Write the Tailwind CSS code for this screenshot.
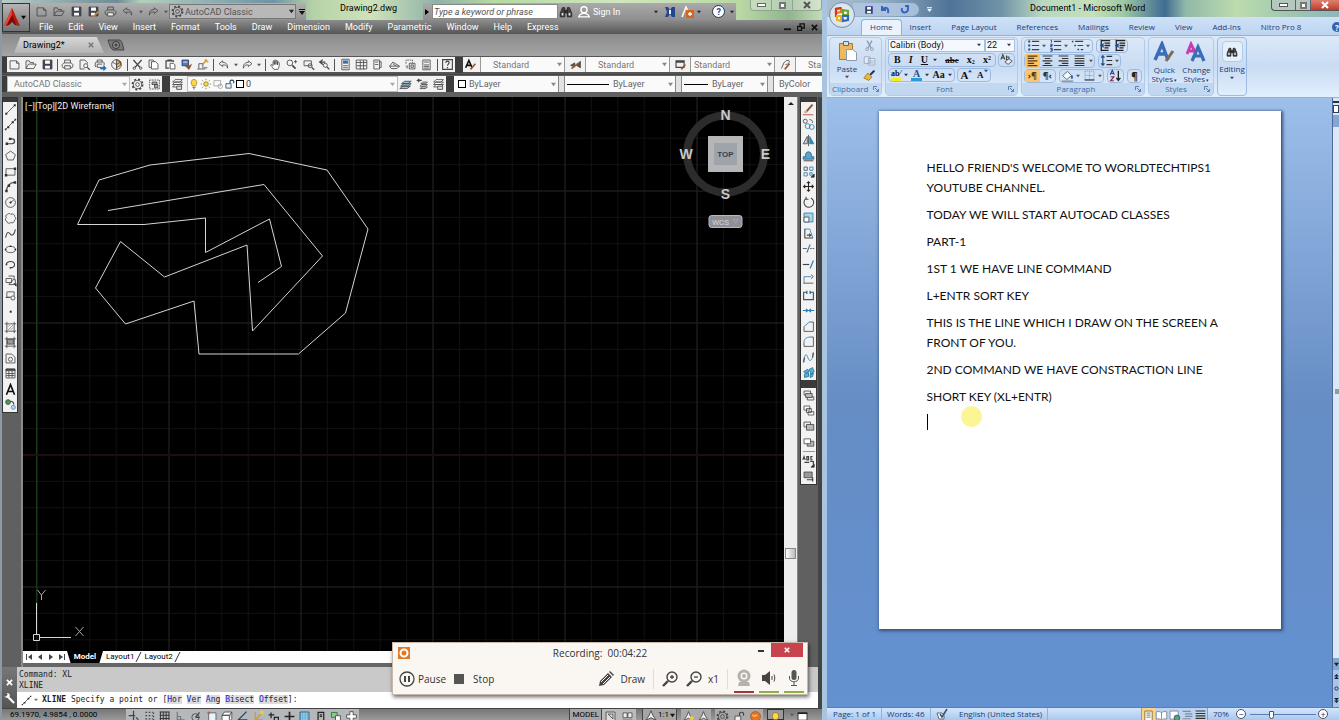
<!DOCTYPE html>
<html lang="en">
<head>
<meta charset="utf-8">
<title>Drawing2.dwg / Document1</title>
<script src="https://cdn.jsdelivr.net/npm/@tailwindcss/browser@4"></script>
</head>
<body class="h-screen overflow-hidden bg-[#b9cfe0] font-['Roboto','Open_Sans',sans-serif] text-[9px] leading-3 text-[#222]">

<svg class="hidden" aria-hidden="true">
  <!-- file and view tools -->
  <symbol id="new" viewBox="0 0 16 16"><path d="M2.5 3.5h8l3 3v7h-11zM10.500 3.500v3h3"/></symbol>
  <symbol id="open" viewBox="0 0 16 16"><path d="M2.500 13V3.500h4l1 2h4v2M2.500 13l3-5.500h9.500l-3 5.500z"/></symbol>
  <symbol id="save" viewBox="0 0 16 16"><path fill="#3c4652" d="M2.500 2.500h11v11h-11z"/><path fill="#fff" stroke="none" d="M5 3h6v4H5zM5 9.500h6v3.500H5z"/></symbol>
  <symbol id="saveas" viewBox="0 0 16 16"><path fill="#3c4652" d="M2.500 2.500h11v11h-11z"/><path fill="#fff" stroke="none" d="M5 3h6v4H5zM5 9.500h5v3.500H5z"/><path stroke="#d08a30" stroke-width="2" d="M8 14l6-6"/></symbol>
  <symbol id="plot" viewBox="0 0 16 16"><path d="M4.500 6V2.500h7V6M4 12H2.500l-1-1V8l2-2h9l2 2v3l-1 1H12"/><path fill="#eee" d="M4.500 9.500h7v4h-7z"/></symbol>
  <symbol id="preview" viewBox="0 0 16 16"><path d="M8 13.500H2.500v-11h6l3 3V7"/><circle cx="9.500" cy="9.500" r="2.500"/><path stroke-width="1.500" d="M11.500 11.500l3 3"/></symbol>
  <symbol id="publish" viewBox="0 0 16 16"><path d="M4 5V2.500h6V5M3 10.500H1.500V6l1-1h9l1 1v3M4 7.500h6M4 7.500v4h4"/><path fill="#2b6cb0" stroke="#2b6cb0" d="M8 11.500h4V9.500l3 3-3 3v-2H8z"/></symbol>
  <symbol id="globe" viewBox="0 0 16 16"><circle cx="8" cy="8" r="6"/><path fill="#e9b83a" d="M8 2l5 3v4L8 12z"/><path d="M3 5l5 3 5-3M8 8v6"/></symbol>
  <symbol id="cut" viewBox="0 0 16 16"><path stroke-width="1.600" d="M3 2.500l8 9M13 2.500l-8 9"/><circle cx="4" cy="12.500" r="1.500"/><circle cx="12" cy="12.500" r="1.500"/></symbol>
  <symbol id="copy" viewBox="0 0 16 16"><path d="M5 11.500H2.500v-9h5l2 2"/><path fill="#fff" d="M5.500 4.500h5l3 3v6h-8z"/></symbol>
  <symbol id="paste" viewBox="0 0 16 16"><path stroke-width="1.500" d="M6 12.500H2.500v-9h9V5M5 3.500v-1h4v1"/><path fill="#fff" d="M7.500 6.500h4l2 2v5h-6z"/></symbol>
  <symbol id="match" viewBox="0 0 16 16"><path fill="#4b7fc0" stroke="#335" d="M2.500 2.500h8v7h-8z"/><path stroke="#fff" d="M4 5h5"/><path fill="#8a5020" stroke="#8a5020" d="M7 10l4 4 3-6-3 2z"/></symbol>
  <symbol id="blockedit" viewBox="0 0 16 16"><path d="M1.500 13.500h10M3.500 13v-6h5v6"/><path stroke="#e0a020" stroke-width="2" d="M9 7l4-5M11 2l4 3"/><path d="M10 12h4"/></symbol>
  <symbol id="undo" viewBox="0 0 16 16"><path d="M7 3.500L2.500 7 7 10.500v-2c3 0 5 0 6 4 .500-5-2-7-6-7z"/></symbol>
  <symbol id="redo" viewBox="0 0 16 16"><path d="M9 3.500L13.500 7 9 10.500v-2c-3 0-5 0-6 4-.500-5 2-7 6-7z"/></symbol>
  <symbol id="hand" viewBox="0 0 16 16"><path fill="#fff" d="M6 14C4 11 3 10 2 8.500c1-1 2 0 3 1V4c1-1 1.500 0 1.500 1V8 3c1-1 2-.500 2 0v5-4.500c1-1 2-.500 2 .500v4.500V5c1-.500 2 0 2 1v4l-1.500 4z"/></symbol>
  <symbol id="zoomrt" viewBox="0 0 16 16"><circle cx="6" cy="6" r="3.500"/><path stroke-width="2" d="M9 9l4 4"/><path d="M11 4.500h4M13 2.500v4"/></symbol>
  <symbol id="zoomwin" viewBox="0 0 16 16"><path d="M2.500 3.500h9v6h-9z"/><circle cx="10" cy="9.500" r="2.500"/><path stroke-width="1.600" d="M12 11.500l3 3"/></symbol>
  <symbol id="zoomprev" viewBox="0 0 16 16"><path stroke-width="1.500" d="M6 2L2 5l4 3M2 5h7"/><circle cx="9" cy="9" r="2.500"/><path stroke-width="1.600" d="M11 11l3 3"/></symbol>
  <symbol id="props" viewBox="0 0 16 16"><path d="M3.500 1.500h9v13h-9z"/><path fill="#3a6ea8" stroke="none" d="M5 3h6v4H5z"/><path d="M5 9.500h6M5 12h6"/></symbol>
  <symbol id="dc" viewBox="0 0 16 16"><path d="M1.500 2.500h13v11h-13zM1.500 5.500h13M6.500 3v11M10.500 3v11M2 9.500h12"/></symbol>
  <symbol id="palette" viewBox="0 0 16 16"><path d="M3.500 2.500h7v11h-7zM10.500 4.500h2v7h-2M5 5h4M5 8h4"/></symbol>
  <symbol id="sheet" viewBox="0 0 16 16"><path d="M2 10l4-5 8 5-3 3H4zM2 10h12M6 7l4 3"/></symbol>
  <symbol id="markup" viewBox="0 0 16 16"><path stroke-dasharray="2 1" d="M2.500 7V2.500h8V6"/><path d="M6.500 6.500h7v7h-7zM2 10h3M3 12h2M8.500 8.500h3v3h-3z"/></symbol>
  <symbol id="calc" viewBox="0 0 16 16"><path d="M3.500 2.500h9v12h-9zM5 5h6M5 8.500h6M5 10.500h6M5 12.500h6"/></symbol>
  <symbol id="help" viewBox="0 0 16 16"><path stroke-width="1.400" d="M2 2h12v12H2zM6 6c0-3 4-2.500 4-.500S8 7.500 8 9.500M8 11v1.500"/></symbol>
  <symbol id="gear" viewBox="0 0 16 16"><circle cx="8" cy="8" r="2.300"/><circle cx="8" cy="8" r="5"/><circle cx="8" cy="8" r="6.300" stroke-width="2" stroke-dasharray="2.500 2.450"/></symbol>
  <symbol id="wsave" viewBox="0 0 16 16"><path stroke-dasharray="2 1" d="M2 2.500h12v11H2z"/><path fill="#aaa" d="M5 5h6v3H5zM8 8h4v4H8z"/></symbol>
  <symbol id="layers" viewBox="0 0 16 16"><path fill="#fff" d="M2 11l3-3h9l-3 3zM2 8l3-3h9l-3 3zM2 5l3-3h9l-3 3z"/><path d="M7 10h6v4H7z" fill="#ddd"/></symbol>
  <symbol id="layersb" viewBox="0 0 16 16"><path fill="#9cc4dc" d="M1 13l4-3h9l-4 3zM2 10l4-3h9l-4 3zM3 7l4-3h8l-4 3z"/></symbol>
  <symbol id="layerp" viewBox="0 0 16 16"><path d="M5 13l2-2h7l-2 2zM5 10l2-2h7l-2 2zM6 7l2-2h6l-2 2z"/><path stroke-width="1.500" d="M7 3H2l2-2M2 3l2 2"/></symbol>
  <!-- drawing tools -->
  <symbol id="line" viewBox="0 0 16 16"><path d="M3 13L13 3"/><path fill="#333" stroke="none" d="M1.500 12h2.500v2.500H1.500zM12 1.500h2.500V4H12z"/></symbol>
  <symbol id="xline" viewBox="0 0 16 16"><path d="M2 14L14 2"/><path fill="#333" stroke="none" d="M4 10h2.500v2.500H4zM9.500 4H12v2.500H9.500zM1 13h2v2H1zM13 1h2v2h-2z"/></symbol>
  <symbol id="pline" viewBox="0 0 16 16"><path stroke-width="1.500" d="M3 12h7c4 0 4-6 0-6H8"/><path fill="#333" stroke="none" d="M2 10.500h3v3H2zM6 4.500h3v3H6z"/></symbol>
  <symbol id="polygon" viewBox="0 0 16 16"><path d="M8 2.500l6 4.500-2.500 6.500h-7L2 7z"/></symbol>
  <symbol id="rect" viewBox="0 0 16 16"><path d="M2.500 4.500h11v8h-11z"/><path fill="#333" stroke="none" d="M1 11h3v3H1zM12 3h3v3h-3z"/></symbol>
  <symbol id="arc" viewBox="0 0 16 16"><path stroke-width="1.400" d="M3 14C3 8 7 3 13 3"/><path fill="#333" stroke="none" d="M1.500 12h3v3h-3zM4.500 5.500h3v3h-3zM12 1.500h3v3h-3z"/></symbol>
  <symbol id="circle" viewBox="0 0 16 16"><circle cx="8" cy="8" r="6"/><path d="M8 8l4-3"/><circle cx="8" cy="8" r="1" fill="#333"/></symbol>
  <symbol id="cloud" viewBox="0 0 16 16"><path d="M4 3c2-2 4-1 4.500 0 2-1.500 5 0 4.500 2.500 2 1 2 3.500 0 4.500 0 3-3 4-4.500 3-1.500 1.500-5 1-5-1.500-2-.500-2.500-3-.500-4.500C1.500 6 2 3.500 4 3z"/></symbol>
  <symbol id="spline" viewBox="0 0 16 16"><path stroke-width="1.300" d="M2 13c2-10 5-5 6-4s4 3 6-6"/></symbol>
  <symbol id="ellipse" viewBox="0 0 16 16"><ellipse cx="8" cy="8" rx="6" ry="3.800"/><path fill="#333" stroke="none" d="M1 7h2v2H1zM7 3h2v2H7zM13 7h2v2h-2z"/></symbol>
  <symbol id="earc" viewBox="0 0 16 16"><path stroke-width="1.300" d="M3 8c0-5 10-5 10 0 0 3-3 4-5 4"/><path fill="#333" stroke="none" d="M2 7h2v2H2zM7 11h2v2H7z"/></symbol>
  <symbol id="insert" viewBox="0 0 16 16"><path d="M5.500 2.500h7v4M2.500 5.500h7v5h-7zM6 13l5-6h3v6z"/><path fill="#333" d="M12 12h3v3z"/></symbol>
  <symbol id="block" viewBox="0 0 16 16"><path d="M3.500 3.500h9v5M3.500 4v6h5M2 10.500h5"/><circle cx="11" cy="11" r="2.500"/></symbol>
  <symbol id="point" viewBox="0 0 16 16"><path fill="#333" stroke="none" d="M7 7h2.500v2.500H7z"/></symbol>
  <symbol id="hatch" viewBox="0 0 16 16"><path d="M3.500 1v14M12.500 1v14M1 3.500h14M1 12.500h14"/><path stroke="#888" d="M5 7l2-2M5 11l6-6M8 11l3-3"/></symbol>
  <symbol id="gradient" viewBox="0 0 16 16"><path fill="#999" d="M4 4h8v6H4z"/><path d="M3.500 1v14M12.500 1v14M1 3.500h14M1 12.500h14"/></symbol>
  <symbol id="region" viewBox="0 0 16 16"><path d="M2.500 13.500v-11h7l4 4v7z"/><circle cx="8" cy="9" r="2.500"/></symbol>
  <symbol id="table" viewBox="0 0 16 16"><path d="M2.500 2.500h11v11h-11zM6 5v8M10 5v8M3 8h10M3 10.500h10"/><path fill="#444" d="M2.500 2.500h11v2h-11z"/></symbol>
  <symbol id="mtext" viewBox="0 0 16 16"><path stroke="#111" stroke-width="2" d="M3 14.500L8 2l5 12.500M5 10.500h6"/></symbol>
  <symbol id="addsel" viewBox="0 0 16 16"><circle cx="5" cy="5" r="3" fill="#4c9a4c"/><circle cx="11.500" cy="11.500" r="2.500" fill="#bcd9f0" stroke="#4a86b8"/><path stroke-width="1.500" d="M8 4c3 0 4 1 4 4"/></symbol>
  <!-- modify tools -->
  <symbol id="erase" viewBox="0 0 16 16"><path stroke="#8a5a3a" stroke-width="2.500" d="M5 11l8-9"/><path stroke="#d8b08a" stroke-width="3" d="M3 12l3-2"/><path stroke="#b33" d="M1 14.500h13"/></symbol>
  <symbol id="copyobj" viewBox="0 0 16 16"><circle cx="4" cy="4" r="2.500"/><circle cx="7" cy="10" r="3" stroke="#2a7ab0"/><circle cx="12" cy="11" r="3" stroke="#2a7ab0"/><path d="M9 2c3 0 4 1 4 4"/></symbol>
  <symbol id="mirror" viewBox="0 0 16 16"><path fill="#c8dce8" d="M6.500 3v9H1.500z"/><path fill="#3a8ab8" stroke="#2a7ab0" d="M9.500 3v9h5z"/><path d="M8 1v14"/></symbol>
  <symbol id="offset" viewBox="0 0 16 16"><path fill="#5aa6cf" stroke="#235e86" d="M1.500 12.500h13v-3h-3c2-8-9-8-7 0h-3z"/><path stroke="#222" d="M2 14.500h12"/></symbol>
  <symbol id="array" viewBox="0 0 16 16"><path d="M2.500 2.500h4v4h-4z"/><path stroke="#2a7ab0" d="M9.500 2.500h4v4h-4zM2.500 9.500h4v4h-4zM9.500 9.500h3v3h-3z"/><path fill="#222" d="M15 11v4h-4z"/></symbol>
  <symbol id="move" viewBox="0 0 16 16"><path stroke="#222" stroke-width="1.300" d="M8 2v12M2 8h12M6 4l2-2 2 2M6 12l2 2 2-2M4 6L2 8l2 2M12 6l2 2-2 2"/></symbol>
  <symbol id="rotate" viewBox="0 0 16 16"><path stroke-width="1.300" d="M5 3a6 6 0 1 0 6-.500M5 1v3h3"/></symbol>
  <symbol id="scale" viewBox="0 0 16 16"><path fill="#a9d3e8" stroke="#2a7ab0" d="M2.500 2.500h11v11h-11z"/><path fill="#fff" d="M2.500 7.500h6v6h-6z"/></symbol>
  <symbol id="stretch" viewBox="0 0 16 16"><path stroke="#2a7ab0" d="M3.500 2.500h6l4 11"/><path stroke-width="1.300" d="M3.500 2v11.500h10M6 10h5M9 8l2 2-2 2"/></symbol>
  <symbol id="trim" viewBox="0 0 16 16"><path d="M1 8h5"/><path stroke-dasharray="2 1" d="M10 8h5"/><path stroke="#2a7ab0" stroke-width="1.400" d="M6 13l4-10"/></symbol>
  <symbol id="extend" viewBox="0 0 16 16"><path stroke-width="1.400" d="M1 8h8"/><path stroke="#2a7ab0" stroke-width="1.400" d="M10 13l4-10"/></symbol>
  <symbol id="breakpt" viewBox="0 0 16 16"><path stroke="#2a7ab0" d="M2.500 13V4.500H11"/><path d="M11 2l3 2.500L11 7M2 12.500h12"/></symbol>
  <symbol id="break" viewBox="0 0 16 16"><path stroke="#2a5a80" stroke-width="1.400" d="M6 4H2v9h12V4h-4M6 2v4M10 2v4"/></symbol>
  <symbol id="join" viewBox="0 0 16 16"><path stroke="#2a7ab0" stroke-width="1.500" d="M1 8h14M5 6l2 2-2 2M11 6L9 8l2 2"/></symbol>
  <symbol id="chamfer" viewBox="0 0 16 16"><path d="M2.500 14V8M9 2.500h5v11.500H2.500"/><path stroke="#2a7ab0" d="M2.500 8L9 2.500"/></symbol>
  <symbol id="fillet" viewBox="0 0 16 16"><path d="M2.500 14V9M10 2.500h4v11.500H2.500"/><path stroke="#2a7ab0" d="M2.500 9c0-4 3-6.500 7.500-6.500"/></symbol>
  <symbol id="blend" viewBox="0 0 16 16"><path stroke-width="1.600" d="M2 14l1-6M14 2l-1 6"/><path stroke="#2a7ab0" d="M3 8c2-8 4 0 5 2s3 3 5-2"/></symbol>
  <symbol id="explode" viewBox="0 0 16 16"><path fill="#5fb0d4" stroke="#1f6f9a" d="M2 7l5-3 2 2-4 3zM9 4l4-2 2 5-4 3zM3 10l5-2v5l-5 1zM10 10l4-1-1 4-3 1z"/></symbol>
  <symbol id="front" viewBox="0 0 16 16"><path d="M2.500 2.500h8v5h-8zM6.500 9.500h8v4h-8z"/><path fill="#b8b8b8" d="M4.500 5.500h8v5h-8z"/></symbol>
  <symbol id="back" viewBox="0 0 16 16"><path fill="#fff" d="M5.500 5.500h6v5h-6zM2.500 2.500h7v5h-7zM7.500 9.500h7v4h-7z"/></symbol>
  <symbol id="above" viewBox="0 0 16 16"><path d="M2.500 2.500h8v6h-8z"/><path fill="#b8b8b8" d="M5.500 5.500h9v7h-9z"/></symbol>
  <symbol id="under" viewBox="0 0 16 16"><path fill="#b8b8b8" d="M6.500 6.500h8v6h-8z"/><path fill="#fff" d="M2.500 3.500h8v6h-8z"/></symbol>
  <symbol id="abcfront" viewBox="0 0 16 16"><path stroke-width="1.500" d="M1 6l1.500-4L4 6M6 2v4h2V2zM13 2h-2v4h2M3 9h6M10 8h4v4"/><path fill="#222" d="M15 11v4h-4z"/></symbol>
  <symbol id="hatchback" viewBox="0 0 16 16"><path fill="#999" d="M2.500 2.500h10v7h-10z"/><path stroke-width="1.500" d="M6 12h8M13 9v5"/></symbol>
  <!-- annotation styles -->
  <symbol id="tstyle" viewBox="0 0 16 16"><path stroke="#111" stroke-width="2" d="M2 12L6 3l4 9M4 9h4"/><path stroke="#9a5a30" stroke-width="2" d="M8 14l6-7"/></symbol>
  <symbol id="dstyle" viewBox="0 0 16 16"><path fill="#555" d="M2 9l5-3v5zM14 4v8L9 9z"/><path stroke="#9a5a30" stroke-width="2" d="M3 13l9-7"/></symbol>
  <symbol id="tabstyle" viewBox="0 0 16 16"><path stroke-width="1.400" d="M2.500 3.500h10v8h-10zM2.500 5h10"/><path stroke="#9a5a30" stroke-width="2" d="M9 14l5-6"/></symbol>
  <symbol id="mlstyle" viewBox="0 0 16 16"><path d="M3 13l3-7 3-3h3c2 3-1 5-4 5"/><path stroke="#9a5a30" stroke-width="2" d="M7 14l6-7"/></symbol>
  <!-- status bar toggles -->
  <symbol id="s-infer" viewBox="0 0 16 16"><path stroke-width="1.500" d="M8 1v12M2 7h8M11 9l3 3"/></symbol>
  <symbol id="s-snap" viewBox="0 0 16 16"><path stroke-width="1.500" stroke-dasharray="2 2" d="M3 3h9M3 7h9M3 11h9M13 3v10H3"/></symbol>
  <symbol id="s-grid" viewBox="0 0 16 16"><path stroke="#333" stroke-width="1.200" d="M2 2.500h12M2 6.500h12M2 10.500h12M2 14h12M3 2v12M6.500 2v12M10 2v12M13.500 2v12"/></symbol>
  <symbol id="s-ortho" viewBox="0 0 16 16"><path stroke="#777" stroke-width="1.500" d="M4 2v10h9M4 8h4v4"/></symbol>
  <symbol id="s-polar" viewBox="0 0 16 16"><circle cx="8" cy="9" r="4.500"/><path stroke-width="1.500" d="M8 9l5-6M8 9h5"/></symbol>
  <symbol id="s-osnap" viewBox="0 0 16 16"><path fill="#e8f4fa" stroke="#555" d="M4.500 3.500h9v11h-9z"/><path fill="#c55" stroke="none" d="M3 2h3v3H3z"/></symbol>
  <symbol id="s-3d" viewBox="0 0 16 16"><path fill="#fff" d="M2.500 6.500h9v8h-9zM2.500 6.500l3-4h9l-3 4zM14.500 2.500v8l-3 4"/></symbol>
  <symbol id="s-otrack" viewBox="0 0 16 16"><path stroke="#246" stroke-width="1.500" d="M13 2L3 12h11"/></symbol>
  <symbol id="s-ducs" viewBox="0 0 16 16"><path stroke="#c93" stroke-width="1.500" d="M4 2v10h9M4 12l8-8"/><path fill="#ec4" stroke="none" d="M10 1h4v4h-4z"/></symbol>
  <symbol id="s-dyn" viewBox="0 0 16 16"><path stroke="#222" stroke-width="1.500" d="M5 3v7M2 6h7M9 9h5v4H9z"/></symbol>
  <symbol id="s-lwt" viewBox="0 0 16 16"><path stroke="#222" stroke-width="2" d="M8 2v11M2 8h12"/></symbol>
  <symbol id="s-tpy" viewBox="0 0 16 16"><path fill="#8fd0ee" stroke="#246" d="M2.500 2.500h11v12h-11z"/><path stroke="#3a8ab8" stroke-dasharray="1 1" d="M3 5h10M3 7h10M3 9h10M3 11h10"/></symbol>
  <symbol id="s-qp" viewBox="0 0 16 16"><path stroke="#222" stroke-width="1.500" d="M5 3h7v10H5zM7 6h3M7 8h3"/></symbol>
  <symbol id="s-sc" viewBox="0 0 16 16"><path fill="#8c8" stroke="#363" d="M3 3h7v6H3z"/><path d="M8 7h6v6H8z" fill="#fff"/></symbol>
  <symbol id="s-am" viewBox="0 0 16 16"><path fill="#fff" d="M6 2h4v4h4v4h-4v4H6v-4H2V6h4z"/></symbol>
  <symbol id="s-model" viewBox="0 0 16 16"><path fill="#ddd" d="M2.500 2.500h11v11h-11z"/><path d="M5 5h6v6M5 5l6 6"/></symbol>
  <symbol id="s-layout" viewBox="0 0 16 16"><path fill="#eee" d="M2.500 3.500h5v6h-5zM8.500 3.500h5v6h-5zM2 12.500h12"/></symbol>
  <symbol id="s-ann" viewBox="0 0 16 16"><path fill="#eee" d="M8 2l2 5 4 6-6-3-6 3 4-6z"/></symbol>
  <symbol id="s-annb" viewBox="0 0 16 16"><path fill="#eee" d="M8 2l2 5 4 6-6-3-6 3 4-6z"/><circle cx="12" cy="10" r="2.500" fill="#ec4" stroke="none"/></symbol>
  <symbol id="lock" viewBox="0 0 16 16"><path fill="#eee" d="M2.500 7.500h7v6h-7z"/><path stroke-width="1.500" d="M8 7V5c0-3 5-3 5 0v2"/></symbol>
  <symbol id="s-orange" viewBox="0 0 16 16"><circle cx="8" cy="8" r="6" fill="#e87722" stroke="#a85010"/><path stroke="#fff" d="M4 6c2 2 4 2 6 0"/></symbol>
  <symbol id="bulb" viewBox="0 0 16 16"><path fill="#ffd84a" stroke="#a07a20" d="M6 10.500C3 7 4 2 8 2s5 5 2 8.500z"/><path d="M6 12.500h4M7 14.500h2"/></symbol>
  <symbol id="s-clean" viewBox="0 0 16 16"><path fill="#fff" stroke="#222" d="M2.500 3.500h11v9h-11z"/><path stroke="#222" stroke-width="2" d="M2 4h12"/></symbol>
  <symbol id="sun" viewBox="0 0 16 16"><circle cx="8" cy="8" r="3" fill="#ffd84a" stroke="#8a7020"/><path stroke="#8a7020" d="M8 1v2M8 13v2M1 8h2M13 8h2M3 3l1.500 1.500M11.500 11.500L13 13M13 3l-1.500 1.500M4.500 11.500L3 13"/></symbol>
  <symbol id="vpfreeze" viewBox="0 0 16 16"><path stroke="#999" d="M2.500 3.500h9v7h-9z"/><circle cx="11" cy="11" r="3" stroke="#999"/></symbol>
  <!-- title bar helpers -->
  <symbol id="binoc" viewBox="0 0 16 16"><path fill="#444" stroke="#222" d="M1.500 9.500L4 3h2.500v10.500h-5zM14.500 9.500L12 3H9.500v10.500h5zM6.500 6h3v3h-3z"/><path fill="#dde" stroke="none" d="M3 9h2v3H3zM11 9h2v3h-2z"/></symbol>
  <symbol id="user" viewBox="0 0 16 16"><circle cx="8" cy="5.500" r="3.500" stroke="#fff" stroke-width="1.500"/><path stroke="#fff" stroke-width="1.500" d="M2 13.500c1-3 3-4 6-4s5 1 6 4z"/></symbol>
  <!-- word processor tools -->
  <symbol id="w-cut" viewBox="0 0 16 16"><path stroke="#8b97ab" stroke-width="1.500" d="M5 2l5 9M11 2l-5 9"/><circle cx="5" cy="12.500" r="1.800" stroke="#8b97ab"/><circle cx="11" cy="12.500" r="1.800" stroke="#8b97ab"/></symbol>
  <symbol id="w-copy" viewBox="0 0 16 16"><path fill="#e6edf6" stroke="#94a3ba" d="M1.500 3.500h7v8h-7zM6.500 5.500h8v8h-8zM8 8.500h5M8 11h5"/></symbol>
  <symbol id="w-brush" viewBox="0 0 16 16"><path stroke="#234" stroke-width="2.500" d="M9 7l5-5"/><path fill="#e8b93c" stroke="#9a7020" d="M6 5l5 5-4 4-6-3z"/></symbol>
  <symbol id="w-clear" viewBox="0 0 16 16"><path stroke-width="1.300" d="M1 8l2.500-6L6 8M2 6h3M8 3v5h3V5H8"/><path fill="#e8eef8" d="M6 11l5-4 4 3-5 4z"/></symbol>
  <symbol id="w-bullets" viewBox="0 0 16 16"><path stroke="#26477c" stroke-width="2.400" d="M1.500 3H4M1.500 8H4M1.500 13H4"/><path stroke="#444" stroke-width="1.500" d="M6 3h9M6 8h9M6 13h9"/></symbol>
  <symbol id="w-numbers" viewBox="0 0 16 16"><path stroke="#26477c" stroke-width="1.200" d="M2 1.500h1v3M1.500 6.500H4v1.500H2v1.500h2M1.500 11.500H4v3.500H1.500M2 13h2"/><path stroke="#444" stroke-width="1.500" d="M6 3h9M6 8h9M6 13h9"/></symbol>
  <symbol id="w-multi" viewBox="0 0 16 16"><path stroke="#26477c" stroke-width="1.800" d="M1 3h2M4 8h2M8 13h2"/><path stroke="#444" stroke-width="1.500" d="M5 3h10M8 8h7M12 13h3"/></symbol>
  <symbol id="w-indent" viewBox="0 0 16 16"><path stroke="#222" stroke-width="1.600" d="M4 2h11M8 5h7M8 8h7M8 11h5M4 14h9M4 1v14"/><path fill="#24508c" stroke="none" d="M7 5v6L2 8z"/></symbol>
  <symbol id="w-left" viewBox="0 0 16 16"><path stroke="#5a3a10" stroke-width="1.600" d="M2 2.500h12M2 5.500h8M2 8.500h12M2 11.500h8M2 14.200h12"/></symbol>
  <symbol id="w-center" viewBox="0 0 16 16"><path stroke="#333" stroke-width="1.400" d="M2 2.500h12M4.500 5.500h7M2 8.500h12M4.500 11.500h7M2 14.200h12"/></symbol>
  <symbol id="w-right" viewBox="0 0 16 16"><path stroke="#333" stroke-width="1.400" d="M2 2.500h12M6 5.500h8M2 8.500h12M6 11.500h8M2 14.200h12"/></symbol>
  <symbol id="w-just" viewBox="0 0 16 16"><path stroke="#333" stroke-width="1.400" d="M2 2.500h12M2 5.500h12M2 8.500h12M2 11.500h12M2 14.200h12"/></symbol>
  <symbol id="w-spacing" viewBox="0 0 16 16"><path stroke="#24508c" stroke-width="1.500" d="M3.500 2v12M1.500 4.500l2-2.500 2 2.500M1.500 11.500l2 2.500 2-2.500"/><path stroke="#333" stroke-width="1.500" d="M8 3h7M8 8h7M8 13h7"/></symbol>
  <symbol id="w-shade" viewBox="0 0 16 16"><path fill="#f4f8ff" stroke="#456" d="M2 8l6-5 5 5-6 5z"/><path stroke="#24508c" stroke-width="2" d="M13.500 8v4"/><path stroke="#999" stroke-width="2" d="M1 15h14"/></symbol>
  <symbol id="w-border" viewBox="0 0 16 16"><path stroke="#7f93b3" stroke-dasharray="1.500 1" d="M2.500 2.500h11v11M2.500 2.500v11M8 3v10M3 8h10"/><path stroke="#333" stroke-width="1.500" d="M2 13.500h12"/></symbol>
  <symbol id="w-sort" viewBox="0 0 16 16"><path stroke="#24508c" stroke-width="1.400" d="M1.500 7L4 1.500 6.500 7M2.500 5.500h3"/><path stroke="#8a2a50" stroke-width="1.400" d="M2 9.500h4l-4 5h4"/><path stroke="#222" stroke-width="1.600" d="M11.500 2v12M9 11l2.500 3 2.500-3"/></symbol>
  <symbol id="w-read" viewBox="0 0 16 16"><path fill="#fff" stroke="#6d7d98" d="M1.500 3.500c3-1 5 0 6.500 1 1.500-1 3.500-2 6.500-1v9c-3-1-5 0-6.500 1-1.500-1-3.500-2-6.500-1zM8 4v9"/></symbol>
  <symbol id="w-print" viewBox="0 0 16 16"><path fill="#fff" stroke="#6d5a30" d="M3.500 2.500h9v12h-9zM5.500 5h5M5.500 7.500h5M5.500 10h5"/></symbol>
  <symbol id="w-web" viewBox="0 0 16 16"><path fill="#fff" stroke="#6d7d98" d="M2.500 2.500h10v10h-10z"/><circle cx="11" cy="11" r="3.500" fill="#5aa07a" stroke="#357"/></symbol>
  <symbol id="w-outline" viewBox="0 0 16 16"><path stroke="#7d8ba5" stroke-width="1.500" d="M2 3h10M5 6h9M5 9h9M2 12h10"/></symbol>
</svg>

<div class="relative grid h-full grid-cols-[822fr_517fr]">

<!-- ============ CAD window ============ -->
<section class="flex min-w-0 flex-col overflow-hidden border-l-2 border-[#8c9aa5] bg-[#606060]">

  <header class="relative h-[34px] shrink-0 bg-[#aebfba]">
    <div class="flex h-5 items-start bg-[linear-gradient(90deg,#b7cbc6_0%,#6f8d96_14%,#b4cfbb_17%,#6f93a8_33%,#b5d3a6_38%,#cfe3ba_45%,#8fb2a8_53%,#b7d9a2_60%,#d0e6c0_75%,#b9d8a4_90%,#8fb58f_96%,#c5dcb8_100%)]">
      <div class="mt-[3px] flex h-[17px] w-[304px] shrink-0 items-center bg-linear-to-b from-[#b0b0b0] to-[#929292] pl-8">
        <div class="flex w-[135px] items-center justify-between" data-tools="new open save saveas plot undo v redo v"></div>
        <label class="flex h-[15px] w-[127px] items-center border border-[#777] bg-[#b8b8b8] text-[#555]">
          <svg class="ml-px size-[13px] fill-none stroke-[#444]"><use href="#gear"/></svg>
          <select aria-label="Workspace" class="min-w-0 flex-1 appearance-none bg-transparent pl-px"><option>AutoCAD Classic</option></select>
          <svg class="mr-px size-[5px] fill-[#222]" viewBox="0 0 6 4"><path d="M0 0h6L3 4z"/></svg>
        </label>
        <button aria-label="Customize" class="ml-[3px]"><svg class="size-[6px] fill-[#111]" viewBox="0 0 6 6"><path d="M0 0h6v1H0zM0 2h6L3 6z"/></svg></button>
      </div>
      <h1 class="min-w-0 flex-1 pt-[2px] pl-[34px] whitespace-nowrap text-black">Drawing2.dwg</h1>
      <div class="mt-[3px] flex h-[17px] w-[313px] shrink-0 items-center bg-linear-to-b from-[#aaa] to-[#8e8e8e]">
        <svg class="ml-px size-[6px] fill-black" viewBox="0 0 6 6"><path d="M1 0l4 3-4 3z"/></svg>
        <input aria-label="Search help" placeholder="Type a keyword or phrase" class="ml-[2px] h-[15px] w-[126px] border border-[#888] bg-white px-px text-[9px] italic placeholder:text-[#555]">
        <button aria-label="Search" class="ml-px"><svg class="size-[14px]"><use href="#binoc"/></svg></button>
        <button class="ml-1 flex items-center gap-[2px] whitespace-nowrap text-white"><svg class="size-[14px] fill-none"><use href="#user"/></svg>Sign In</button>
        <svg class="ml-[34px] size-1 fill-[#222]" viewBox="0 0 6 4"><path d="M0 0h6L3 4z"/></svg>
        <svg class="ml-[6px] size-3" viewBox="0 0 12 12"><path fill="#25458f" d="M1 1h3l2 3 2-3h3v10H8L6 8l-2 3H1l2-5z"/><path fill="#e8eefa" d="M5 4h2v4H5z"/></svg>
        <svg class="ml-[5px] size-[13px]" viewBox="0 0 13 13"><path fill="none" stroke="#fff" stroke-width="1.500" d="M1 12l4-10 3 6"/><path fill="#d9641c" d="M5 5h8v8H5z"/><path stroke="#fff" stroke-width="1.300" d="M9 7v4M7 9h4"/></svg>
        <svg class="ml-[3px] size-1 fill-[#222]" viewBox="0 0 6 4"><path d="M0 0h6L3 4z"/></svg>
        <button aria-label="Help" class="ml-[11px] grid size-[13px] place-items-center rounded-full border border-[#235] bg-white text-[9px] font-bold text-[#25458f]">?</button>
        <svg class="ml-[5px] size-1 fill-[#222]" viewBox="0 0 6 4"><path d="M0 0h6L3 4z"/></svg>
      </div>
      <div class="ml-[14px] flex h-[11px] w-[72px] shrink-0 overflow-hidden rounded-b border border-t-0 border-[#8fa58c] bg-white/30 text-[#666]">
        <button aria-label="Minimize" class="grid flex-1 place-items-center border-r border-[#8fa58c]"><span class="h-[4px] w-[9px] border border-[#666] bg-white"></span></button>
        <button aria-label="Restore" class="grid flex-1 place-items-center border-r border-[#8fa58c]"><span class="size-[7px] border-2 border-[#777] bg-white"></span></button>
        <button aria-label="Close" class="grid w-7 place-items-center"><svg class="size-2 stroke-[#555]" viewBox="0 0 8 8"><path stroke-width="2" d="M1 1l6 6M7 1L1 7"/></svg></button>
      </div>
    </div>
    <nav class="flex h-[14px] items-center gap-[15px] bg-linear-to-b from-[#8c8c8c] to-[#565656] pl-[37px] text-white">
      <a href="#">File</a><a href="#">Edit</a><a href="#">View</a><a href="#">Insert</a><a href="#">Format</a><a href="#">Tools</a><a href="#">Draw</a><a href="#">Dimension</a><a href="#">Modify</a><a href="#">Parametric</a><a href="#">Window</a><a href="#">Help</a><a href="#">Express</a>
      <span class="ml-auto flex items-center gap-[6px] pr-1">
        <button aria-label="Minimize drawing"><svg class="size-[7px]" viewBox="0 0 8 8"><path stroke="#111" stroke-width="2" d="M0 6h8"/></svg></button>
        <button aria-label="Restore drawing"><svg class="size-2" viewBox="0 0 8 8"><path fill="none" stroke="#111" stroke-width="1.300" d="M.5 3.500h4v4h-4zM3 3V.8h4.300V5H5"/></svg></button>
        <button aria-label="Close drawing"><svg class="size-[7px]" viewBox="0 0 8 8"><path stroke="#111" stroke-width="2" d="M1 1l6 6M7 1L1 7"/></svg></button>
      </span>
    </nav>
    <button aria-label="Application menu" class="absolute top-[3px] left-0 flex h-[29px] w-7 items-center border border-[#333] bg-linear-to-b from-[#b5b5b5] to-[#757575]">
      <svg class="h-[22px] w-[18px]" viewBox="0 0 18 22"><path fill="#b8160c" d="M9 1l8 18-5-3-3-7-3 7-5 3z"/><path fill="#e8452c" d="M9 1L1 19l4-2 4-9z"/><path fill="#7d0a06" d="M9 8l4 9 4 2-5-1-3-3-3 3-3 1z"/></svg>
      <svg class="size-[5px] fill-black" viewBox="0 0 6 4"><path d="M0 0h6L3 4z"/></svg>
    </button>
  </header>

  <div class="flex h-[22px] shrink-0 items-end bg-linear-to-b from-[#8b8b8b] to-[#a5a5a5] pb-[3px] pl-3">
    <div class="flex h-4 w-[90px] items-center justify-between bg-linear-to-b from-[#d6d6d6] to-[#b4b4b4] pr-[10px] pl-[9px] text-black [clip-path:polygon(7%_0,92%_0,100%_100%,0_100%)]">Drawing2*<button aria-label="Close tab"><svg class="size-[6px]" viewBox="0 0 8 8"><path stroke="#777" stroke-width="2" d="M1 1l6 6M7 1L1 7"/></svg></button></div>
    <button aria-label="New drawing tab" class="mb-[2px] ml-[3px]"><svg class="h-3 w-[18px]" viewBox="0 0 18 12"><path fill="#777" stroke="#444" d="M1 1h12c2 1 3 6 4 10H6C3 9 2 4 1 1z"/><circle cx="9" cy="6" r="3.500" fill="#999" stroke="#333"/><path stroke="#333" d="M7 6h4M9 4v4"/></svg></button>
  </div>

  <div class="flex h-[18px] shrink-0 items-center bg-[#555] pb-px">
    <span class="h-4 w-[5px] shrink-0 bg-[#3d3d3d]"></span>
    <div class="flex h-[15px] w-[448px] shrink-0 items-center justify-between bg-[#f2f2f2]" data-tools="new open save | plot preview publish globe | cut copy paste match blockedit | undo v redo v | hand zoomrt zoomwin zoomprev | props dc palette sheet markup calc | help"></div>
    <span class="h-4 w-[8px] shrink-0 bg-[#3d3d3d]"></span>
    <div class="flex h-[15px] min-w-0 flex-1 items-center bg-[#f2f2f2] text-[#777]">
      <div class="flex w-[17px] shrink-0" data-tools="tstyle"></div>
      <label class="flex h-full w-[85px] shrink-0 items-center border-x border-[#999] bg-[#fafafa] pr-[2px] pl-3"><select aria-label="Text style" class="min-w-0 flex-1 appearance-none bg-transparent"><option>Standard</option></select><svg class="size-[5px] fill-[#888]" viewBox="0 0 6 4"><path d="M0 0h6L3 4z"/></svg></label>
      <div class="ml-[3px] flex w-[17px] shrink-0" data-tools="dstyle"></div>
      <label class="flex h-full w-[85px] shrink-0 items-center border-x border-[#999] bg-[#fafafa] pr-[2px] pl-3"><select aria-label="Dimension style" class="min-w-0 flex-1 appearance-none bg-transparent"><option>Standard</option></select><svg class="size-[5px] fill-[#888]" viewBox="0 0 6 4"><path d="M0 0h6L3 4z"/></svg></label>
      <div class="ml-[3px] flex w-[17px] shrink-0" data-tools="tabstyle"></div>
      <label class="flex h-full w-[85px] shrink-0 items-center border-x border-[#999] bg-[#fafafa] pr-[2px] pl-[3px]"><select aria-label="Table style" class="min-w-0 flex-1 appearance-none bg-transparent"><option>Standard</option></select><svg class="size-[5px] fill-[#888]" viewBox="0 0 6 4"><path d="M0 0h6L3 4z"/></svg></label>
      <div class="ml-[3px] flex w-[17px] shrink-0" data-tools="mlstyle"></div>
      <label class="flex h-full min-w-0 flex-1 items-center overflow-hidden border-l border-[#999] bg-[#fafafa] pl-3"><select aria-label="Multileader style" class="w-12 shrink-0 appearance-none bg-transparent"><option>Standard</option></select></label>
    </div>
  </div>

  <div class="flex h-[23px] shrink-0 items-start border-t border-[#444] bg-[#606060] pt-px">
    <span class="h-4 w-[5px] shrink-0 bg-[#3d3d3d]"></span>
    <div class="flex h-4 w-[155px] shrink-0 items-center bg-[#f2f2f2] text-[#777]">
      <label class="flex h-full flex-1 items-center border border-[#bbb] bg-[#fafafa] pr-[2px] pl-[6px]"><select aria-label="Workspace" class="min-w-0 flex-1 appearance-none bg-transparent"><option>AutoCAD Classic</option></select><svg class="size-[5px] fill-[#aaa]" viewBox="0 0 6 4"><path d="M0 0h6L3 4z"/></svg></label>
      <div class="flex w-8 shrink-0 justify-between" data-tools="gear wsave"></div>
    </div>
    <span class="h-4 w-[8px] shrink-0 bg-[#3d3d3d]"></span>
    <div class="flex h-4 w-[276px] shrink-0 items-center bg-[#f2f2f2] text-[#444]">
      <div class="flex w-[17px]" data-tools="layers"></div>
      <label class="flex h-full min-w-0 flex-1 items-center border border-[#bbb] bg-[#fafafa] pr-[2px]">
        <svg class="size-3 fill-none stroke-[#444]"><use href="#bulb"/></svg><svg class="size-3 fill-none"><use href="#sun"/></svg><svg class="size-3 fill-none"><use href="#vpfreeze"/></svg><svg class="size-3 fill-none stroke-[#246]"><use href="#lock"/></svg>
        <span class="mr-[2px] size-2 border border-black bg-white"></span>
        <select aria-label="Layer" class="min-w-0 flex-1 appearance-none bg-transparent"><option>0</option></select><svg class="size-[5px] fill-[#aaa]" viewBox="0 0 6 4"><path d="M0 0h6L3 4z"/></svg>
      </label>
      <div class="flex w-12 justify-between" data-tools="layersb layerp layers"></div>
    </div>
    <span class="h-4 w-[8px] shrink-0 bg-[#3d3d3d]"></span>
    <div class="flex h-4 min-w-0 flex-1 items-center gap-[5px] bg-[#e2e2e2] text-[#666]">
      <label class="flex h-full w-[105px] shrink-0 items-center gap-[3px] border-r border-[#888] bg-[#fafafa] pr-[2px] pl-1"><span class="size-2 border border-black bg-white"></span><select aria-label="Colour" class="min-w-0 flex-1 appearance-none bg-transparent"><option>ByLayer</option></select><svg class="size-[5px] fill-[#888]" viewBox="0 0 6 4"><path d="M0 0h6L3 4z"/></svg></label>
      <label class="flex h-full w-[112px] shrink-0 items-center gap-1 border-x border-[#888] bg-[#fafafa] pr-[2px] pl-[2px]"><span class="h-px w-[42px] bg-black"></span><select aria-label="Linetype" class="min-w-0 flex-1 appearance-none bg-transparent"><option>ByLayer</option></select><svg class="size-[5px] fill-[#888]" viewBox="0 0 6 4"><path d="M0 0h6L3 4z"/></svg></label>
      <label class="flex h-full w-[87px] shrink-0 items-center gap-1 border-x border-[#888] bg-[#fafafa] pr-[2px] pl-[2px]"><span class="h-px w-[24px] bg-black"></span><select aria-label="Lineweight" class="min-w-0 flex-1 appearance-none bg-transparent"><option>ByLayer</option></select><svg class="size-[5px] fill-[#888]" viewBox="0 0 6 4"><path d="M0 0h6L3 4z"/></svg></label>
      <label class="flex h-full min-w-0 flex-1 items-center overflow-hidden border-l border-[#888] bg-[#fafafa] pl-[5px]"><select aria-label="Plot style" class="w-12 shrink-0 appearance-none bg-transparent"><option>ByColor</option></select></label>
    </div>
  </div>

  <div class="flex min-h-0 flex-1">
    <aside class="w-[21px] shrink-0 border-r-2 border-[#8a8a8a] bg-[#606060]">
      <div class="w-4 border border-[#333] bg-[#3a3a3a] pt-1"><div class="flex h-[310px] flex-col items-center justify-between bg-[#f2f2f2]" data-tools="line xline pline polygon rect arc circle cloud spline ellipse earc insert block point hatch gradient region table mtext addsel"></div></div>
    </aside>

    <div class="flex min-w-0 flex-1 flex-col">
      <div class="flex min-h-0 flex-1">
        <div class="min-w-0 flex-1 bg-black">
          <svg class="block size-full" role="img" aria-label="Drawing area">
            <defs>
              <pattern id="minor" width="26.400" height="26.400" patternUnits="userSpaceOnUse" patternTransform="translate(36.500 454.500)"><path d="M.5 0v26.400M0 .5h26.400" stroke="#111" fill="none"/></pattern>
              <pattern id="major" width="132" height="132" patternUnits="userSpaceOnUse" patternTransform="translate(36.500 454.500)"><path d="M.5 0v132M0 .5h132" stroke="#1f2022" fill="none"/></pattern>
            </defs>
            <g transform="translate(-23 -97)">
              <rect x="23" y="97" width="2000" height="2000" fill="url(#minor)"/>
              <rect x="23" y="97" width="2000" height="2000" fill="url(#major)"/>
              <path d="M36.500 97V603" stroke="#1d3a1d"/>
              <path d="M23 455H2000" stroke="#240c0c" stroke-width="2"/>
              <polyline fill="none" stroke="#d4d4d4" points="108,210.500 264,184.500 322.500,256 252.500,331 247,245 164.500,277 120.500,241.500 95.500,288 125.500,324 194,301 199,354 298.500,354 345.500,313 368,229 327,170 249,153.500 150,165 99,180 77.500,224.500 144,224.500 205.500,218 205.500,252.500 269.500,219 281.500,266.500 258,282.500"/>
              <path fill="none" stroke="#d8d8d8" d="M36.500 603V634M39 637.500H71M33.500 634.500h6v6h-6z"/>
              <path fill="none" stroke="#aaa" d="M37.500 590l4 5 4-5M41.500 595v5M75.500 627l8 9M83.500 627l-8 9"/>
              <text x="25" y="109" fill="#eee" font-size="9">[−][Top][2D Wireframe]</text>
              <circle cx="725.500" cy="154" r="38.500" fill="none" stroke="#2c2c2c" stroke-width="8"/>
              <path fill="#b4b6b8" d="M708 136h35v36h-35z"/><path fill="#9fa4ab" d="M714 143h23v22h-23z"/>
              <g text-anchor="middle" font-weight="bold" font-family="Liberation Sans, sans-serif">
                <text x="725.500" y="157" fill="#3c4048" font-size="8">TOP</text>
                <g fill="#c9c9c9" font-size="14"><text x="725.500" y="120">N</text><text x="686" y="159">W</text><text x="765.500" y="159">E</text><text x="725.500" y="199">S</text></g>
              </g>
              <rect x="709" y="215.500" width="33" height="12" rx="2.500" fill="#8f9097" stroke="#b8b8be"/>
              <text x="712" y="224.500" fill="#d4d4d8" font-size="8">WCS</text><path fill="none" stroke="#a4a4aa" d="M733 219.500h5l-2.500 4z"/>
            </g>
          </svg>
        </div>
        <div class="flex w-[14px] shrink-0 flex-col items-center border-r border-[#888] bg-[#eee]">
          <svg class="mt-1 size-[6px] fill-[#222]" viewBox="0 0 6 6"><path d="M0 4h6L3 1z"/></svg>
          <span class="mt-auto mb-[92px] h-[11px] w-[11px] border border-[#888] bg-linear-to-r from-white to-[#bbb]"></span>
        </div>
      </div>
      <div class="flex h-3 shrink-0 items-center bg-white text-[8px] text-black">
        <span class="flex w-11 items-center justify-around text-[#333]">
          <button aria-label="First layout"><svg class="size-2" viewBox="0 0 8 8"><path fill="#444" d="M1 1h1v6H1zM7 1v6L3 4z"/></svg></button>
          <button aria-label="Previous layout"><svg class="size-2" viewBox="0 0 8 8"><path fill="#444" d="M6 1v6L2 4z"/></svg></button>
          <button aria-label="Next layout"><svg class="size-2" viewBox="0 0 8 8"><path fill="#444" d="M2 1v6l4-3z"/></svg></button>
          <button aria-label="Last layout"><svg class="size-2" viewBox="0 0 8 8"><path fill="#444" d="M6 1h1v6H6zM1 1v6l4-3z"/></svg></button>
        </span>
        <button class="h-full w-[36px] bg-black font-bold text-white [clip-path:polygon(0_0,100%_0,90%_100%,10%_100%)]">Model</button>
        <button class="pl-[3px]">Layout1</button>
        <svg class="mr-[2px] ml-px h-3 w-[7px]" viewBox="0 0 7 12"><path stroke="#333" d="M1 11L6 1"/></svg>
        <button>Layout2</button>
        <svg class="ml-px h-3 w-[7px]" viewBox="0 0 7 12"><path stroke="#333" d="M1 11L6 1"/></svg>
      </div>
      <div class="h-1 shrink-0 bg-[#666]"></div>
    </div>

    <aside class="w-6 shrink-0 border-r-4 border-[#444] bg-[#606060] pl-[2px]">
      <div class="w-[17px] border border-[#333] bg-[#3a3a3a] pt-1">
        <div class="flex h-[278px] flex-col items-center justify-between bg-[#f2f2f2]" data-tools="erase copyobj mirror offset array move rotate scale stretch trim extend breakpt break join chamfer fillet blend explode"></div>
        <div class="mt-2 flex h-[96px] flex-col items-center justify-between bg-[#f2f2f2]" data-tools="front back above under - abcfront hatchback"></div>
      </div>
    </aside>
  </div>

  <div class="flex h-[41px] shrink-0 font-['DejaVu_Sans_Mono',monospace] text-[8px] text-[#222]">
    <div class="flex w-[15px] shrink-0 flex-col items-center justify-around bg-linear-to-b from-[#777] to-[#555]">
      <svg class="mt-2 size-[7px]" viewBox="0 0 8 8"><path stroke="#fff" stroke-width="2" d="M1 1l6 6M7 1L1 7"/></svg>
      <svg class="size-[11px]" viewBox="0 0 12 12"><path fill="none" stroke="#fff" stroke-width="2.400" d="M5 5l6 6"/><path fill="#fff" d="M0 3l2 1 2-2-1-2c3 0 4 2 3 4S2 6 0 3z"/></svg>
    </div>
    <div class="min-w-0 flex-1">
      <div class="h-[25px] bg-[#c9c9c9] pt-[2px] pl-[2px] leading-[11px]"><p>Command: XL</p><p>XLINE</p></div>
      <div class="flex h-4 items-center gap-[2px] bg-white pl-1 whitespace-pre"><svg class="size-[11px] fill-none stroke-[#333]"><use href="#xline"/></svg><svg class="mr-[2px] size-1 fill-[#777]" viewBox="0 0 6 4"><path d="M0 0h6L3 4z"/></svg><p><b>XLINE</b> Specify a point or [<a href="#" class="bg-[#ddd] text-[#223]"><span class="text-[#22c]">H</span>or</a> <a href="#" class="bg-[#ddd] text-[#223]"><span class="text-[#22c]">V</span>er</a> <a href="#" class="bg-[#ddd] text-[#223]"><span class="text-[#22c]">A</span>ng</a> <a href="#" class="bg-[#ddd] text-[#223]"><span class="text-[#22c]">B</span>isect</a> <a href="#" class="bg-[#ddd] text-[#223]"><span class="text-[#22c]">O</span>ffset</a>]:</p></div>
    </div>
    <span class="w-1 bg-[#444]"></span>
  </div>

  <footer class="flex h-3 shrink-0 items-start overflow-hidden border-t border-[#444] bg-linear-to-b from-[#777] to-[#999]">
    <output class="w-[124px] shrink-0 pt-px pl-2 text-[8px] leading-[10px] text-black">69.1970, 4.9854 , 0.0000</output>
    <div class="flex w-[233px] shrink-0 justify-between bg-[#b5b8ba]" data-tools="s-infer s-snap s-grid s-ortho s-polar s-osnap s-3d s-otrack s-ducs s-dyn s-lwt s-tpy s-qp s-sc s-am"></div>
    <button class="ml-auto h-full border-x border-[#444] bg-[#a5a5a5] px-[2px] text-[8px] text-black">MODEL</button>
    <div class="flex w-[34px] justify-around bg-[#bbb]" data-tools="s-model s-layout"></div>
    <button class="ml-[6px] flex h-full items-start border-x border-[#444] bg-[#a5a5a5] px-px text-[8px] text-black"><svg class="size-[14px] fill-none stroke-[#444]"><use href="#s-ann"/></svg><span>1:1</span><svg class="mt-[4px] ml-px size-[5px] fill-[#111]" viewBox="0 0 6 4"><path d="M0 0h6L3 4z"/></svg></button>
    <div class="ml-1 flex bg-[#aaa]" data-tools="s-annb s-ann"></div>
    <div class="ml-1 flex w-12 justify-between bg-[#aaa]" data-tools="gear lock s-orange"></div>
    <div class="ml-1 flex h-full border border-[#333] bg-[#999]" data-tools="bulb"></div>
    <div class="ml-[5px] flex" data-tools="v s-clean"></div>
    <span class="w-[12px]"></span>
  </footer>
</section>

<!-- ============ Word processor window ============ -->
<section class="flex min-w-0 flex-col overflow-hidden border-l-[5px] border-[#a9c4de] bg-[#bfd6f1] font-['Open_Sans','Noto_Sans',sans-serif] text-[8px] text-[#1d3c73]">
  <header class="relative flex h-[17px] shrink-0 items-start bg-[linear-gradient(90deg,#a8bfd0_0%,#8ea9c0_12%,#4f7396_24%,#6f93a6_34%,#b9d8c0_42%,#c3e0b8_52%,#9cc8a4_58%,#3f6c92_66%,#90b8a8_70%,#bcdcae_80%,#a0c8b0_90%,#8fb4bc_100%)]">
    <div class="mt-[3px] ml-[26px] flex h-[13px] w-[66px] items-center gap-[6px] rounded-r-full bg-[#b4c9e4]/80 pl-[11px]">
      <button aria-label="Save"><svg class="size-[10px] fill-none stroke-[#33b]"><use href="#save"/></svg></button>
      <button aria-label="Undo"><svg class="size-[10px]" viewBox="0 0 10 10"><path fill="none" stroke="#3a62c0" stroke-width="2" d="M2 1v4h4M2 5c4-4 7-2 6 3"/></svg></button>
      <button aria-label="Repeat" class="ml-1"><svg class="size-[10px]" viewBox="0 0 10 10"><path fill="none" stroke="#3a62c0" stroke-width="2" d="M2 3c-2 6 7 6 6 0M5 1h3v3"/></svg></button>
    </div>
    <svg class="mt-[7px] ml-2 size-[5px] fill-white" viewBox="0 0 6 6"><path d="M0 0h6v1H0zM0 2h6L3 6z"/></svg>
    <h1 class="min-w-0 flex-1 pt-[2px] pl-[98px] font-['Roboto',sans-serif] text-[9px] whitespace-nowrap text-black">Document1 - Microsoft Word</h1>
    <div class="flex h-[11px] w-[68px] shrink-0 overflow-hidden rounded-bl border border-t-0 border-r-0 border-[#555] bg-[#b4c8bd]">
      <button aria-label="Minimize" class="grid w-6 place-items-center border-r border-[#567]"><span class="h-[4px] w-[9px] border border-[#555] bg-white"></span></button>
      <button aria-label="Restore" class="grid w-[15px] place-items-center border-r border-[#567]"><span class="size-[7px] border-2 border-[#777] bg-white"></span></button>
      <button aria-label="Close" class="grid flex-1 place-items-center bg-linear-to-b from-[#e08070] to-[#c0392b]"><svg class="size-2" viewBox="0 0 8 8"><path stroke="#fff" stroke-width="2" d="M1 1l6 6M7 1L1 7"/></svg></button>
    </div>
    <button aria-label="Office button" class="absolute top-[2px] left-[2px] grid size-[26px] place-items-center rounded-full border border-[#7b8ea8] bg-radial from-white to-[#c4d2e2]">
      <svg class="size-4" viewBox="0 0 16 16" fill="none" stroke-width="2.200"><path stroke="#e07a1a" d="M2 6V2l5-1v4z"/><path stroke="#d03a1a" d="M7 1l-5 1v8"/><path stroke="#6aa52a" d="M9 3l5 1v4H9z"/><path stroke="#2a6ac0" d="M8 9h6v4l-5 1z"/><path stroke="#eab020" d="M3 9h4v5l-4-1z"/></svg>
    </button>
  </header>

  <nav class="flex h-[18px] shrink-0 items-end bg-linear-to-b from-[#cfe1f7] to-[#bdd4f0] pl-[34px] whitespace-nowrap">
    <a href="#" class="mr-[-2px] h-4 rounded-t border border-b-0 border-[#8db2e3] bg-[#eaf2fc] px-2 pt-px">Home</a>
    <a href="#" class="h-4 px-[10px] pt-[2px]">Insert</a><a href="#" class="h-4 px-[10px] pt-[2px]">Page Layout</a><a href="#" class="h-4 px-[10px] pt-[2px]">References</a><a href="#" class="h-4 px-[10px] pt-[2px]">Mailings</a><a href="#" class="h-4 px-[10px] pt-[2px]">Review</a><a href="#" class="h-4 px-[10px] pt-[2px]">View</a><a href="#" class="h-4 px-[10px] pt-[2px]">Add-Ins</a><a href="#" class="h-4 px-[10px] pt-[2px]">Nitro Pro 8</a>
    <button aria-label="Help" class="mr-[-3px] mb-[3px] ml-auto grid size-[10px] shrink-0 place-items-center rounded-full bg-[#2f62b5] text-[8px] font-bold text-white">?</button>
  </nav>

  <div class="flex h-[63px] shrink-0 gap-[3px] border-y border-[#8db2e3] bg-linear-to-b from-[#dce9f8] via-[#c9dcf3] to-[#e2f0fd] py-px pl-[2px]">
    <div class="flex w-[53px] shrink-0 flex-col rounded-sm border border-[#b2cbe8]">
      <div class="flex min-h-0 flex-1 justify-between px-1">
        <button class="flex flex-col items-center pt-[2px] pl-[2px]"><svg class="h-[22px] w-[22px]" viewBox="0 0 22 22"><path fill="#ecb95c" stroke="#a87828" d="M3.500 3.500h13v16h-13z"/><path fill="#dde" stroke="#667" d="M7.500 1.500h5v4h-5z"/><path fill="#fff" stroke="#8a9ab0" d="M10.500 9.500h6l4 3v8h-10z"/></svg><span class="mt-px">Paste</span><svg class="size-1 fill-[#446]" viewBox="0 0 6 4"><path d="M0 0h6L3 4z"/></svg></button>
        <div class="flex flex-col justify-around" data-tools="w-cut w-copy w-brush"></div>
      </div>
      <div class="flex h-3 shrink-0 items-center justify-between bg-[#c1d8f0] px-[2px] text-[#3e6aaa]"><span>Clipboard</span><svg class="size-[6px] fill-none stroke-[#5f80b4]" viewBox="0 0 6 6"><path d="M.5 4V.5H4M2 2l3.500 3.500V3M5.500 5.500H3"/></svg></div>
    </div>
    <div class="flex w-[133px] shrink-0 flex-col rounded-sm border border-[#b2cbe8]">
      <div class="flex min-h-0 flex-1 flex-col justify-around px-[2px] text-[#111]">
        <div class="flex h-[13px] font-['Roboto',sans-serif] text-[9px]">
          <label class="flex w-[97px] items-center border border-[#a5bfe0] bg-[#f4f9ff] pr-[3px] pl-px"><select aria-label="Font" class="min-w-0 flex-1 appearance-none bg-transparent"><option>Calibri (Body)</option></select><svg class="size-1 fill-[#335]" viewBox="0 0 6 4"><path d="M0 0h6L3 4z"/></svg></label>
          <label class="flex w-[30px] items-center border border-[#a5bfe0] bg-[#f4f9ff] pr-[3px] pl-px"><select aria-label="Font size" class="min-w-0 flex-1 appearance-none bg-transparent"><option>22</option></select><svg class="size-1 fill-[#335]" viewBox="0 0 6 4"><path d="M0 0h6L3 4z"/></svg></label>
        </div>
        <div class="flex h-[14px] justify-between font-['Liberation_Serif',serif] text-[10px]">
          <div class="flex w-[108px] items-center justify-between rounded-sm border border-[#9dbbe2] pr-1 pl-[5px]">
            <button class="font-bold">B</button><button class="font-bold italic">I</button><span class="flex items-center gap-[5px]"><button class="font-bold underline">U</button><svg class="size-1 fill-[#335]" viewBox="0 0 6 4"><path d="M0 0h6L3 4z"/></svg></span><button class="text-[9px] font-bold line-through">abc</button><button class="font-bold">x<sub class="text-[6px]">2</sub></button><button class="font-bold">x<sup class="text-[6px]">2</sup></button>
          </div>
          <div class="flex items-center rounded-sm border border-[#9dbbe2]" data-tools="w-clear"></div>
        </div>
        <div class="flex h-[14px] gap-[2px] font-['Liberation_Serif',serif] text-[10px]">
          <div class="flex w-[67px] items-center justify-between rounded-sm border border-[#9dbbe2] px-[2px]">
            <button aria-label="Highlight" class="border-b-[3px] border-[#f6ee1a] text-[8px] leading-2 font-bold">ab⁄</button><svg class="size-1 fill-[#335]" viewBox="0 0 6 4"><path d="M0 0h6L3 4z"/></svg>
            <button aria-label="Font color" class="border-b-[3px] border-[#2a9ad8] px-[2px] leading-2 font-bold text-[#24508c]">A</button><svg class="size-1 fill-[#335]" viewBox="0 0 6 4"><path d="M0 0h6L3 4z"/></svg>
            <button class="font-bold">Aa</button><svg class="size-1 fill-[#335]" viewBox="0 0 6 4"><path d="M0 0h6L3 4z"/></svg>
          </div>
          <div class="flex w-[34px] items-center justify-around rounded-sm border border-[#9dbbe2]">
            <button aria-label="Grow font" class="flex items-start text-[11px] font-bold">A<svg class="size-1 fill-[#24508c]" viewBox="0 0 6 4"><path d="M0 4h6L3 0z"/></svg></button>
            <button aria-label="Shrink font" class="flex items-start text-[9px] font-bold">A<svg class="size-1 fill-[#24508c]" viewBox="0 0 6 4"><path d="M0 0h6L3 4z"/></svg></button>
          </div>
        </div>
      </div>
      <div class="flex h-3 shrink-0 items-center bg-[#c1d8f0] px-[3px] text-[#3e6aaa]"><span class="flex-1 pr-2 text-center">Font</span><svg class="size-[6px] fill-none stroke-[#5f80b4]" viewBox="0 0 6 6"><path d="M.5 4V.5H4M2 2l3.500 3.500V3M5.500 5.500H3"/></svg></div>
    </div>
    <div class="flex w-[124px] shrink-0 flex-col rounded-sm border border-[#b2cbe8]">
      <div class="flex min-h-0 flex-1 flex-col justify-around px-[2px]">
        <div class="flex h-[14px] gap-[3px]">
          <div class="flex w-[69px] items-center justify-between rounded-sm border border-[#9dbbe2] px-px" data-tools="w-bullets v w-numbers v w-multi v"></div>
          <div class="flex items-center rounded-sm border border-[#9dbbe2]" data-tools="w-indent w-indent"></div>
        </div>
        <div class="flex h-[14px] gap-[3px]">
          <div class="flex w-[71px] items-center justify-between rounded-sm border border-[#9dbbe2]"><div class="flex bg-[#fbc569]" data-tools="w-left"></div><div class="flex flex-1 items-center justify-between" data-tools="w-center w-right w-just v"></div></div>
          <div class="flex items-center rounded-sm border border-[#9dbbe2]" data-tools="w-spacing v"></div>
        </div>
        <div class="flex h-[14px] gap-[3px]">
          <div class="flex w-8 items-center rounded-sm border border-[#9dbbe2] text-[9px] text-[#333]"><button aria-label="Left to right" class="h-full flex-1 bg-[#fbc569] font-bold text-[#5a3a10]">›¶</button><button aria-label="Right to left" class="flex-1 font-bold">¶‹</button></div>
          <div class="flex w-[46px] items-center justify-between rounded-sm border border-[#9dbbe2]" data-tools="w-shade v w-border v"></div>
          <div class="flex items-center rounded-sm border border-[#9dbbe2]" data-tools="w-sort"></div>
          <button aria-label="Show marks" class="w-[15px] rounded-sm border border-[#9dbbe2] text-[10px] font-bold text-[#222]">¶</button>
        </div>
      </div>
      <div class="flex h-3 shrink-0 items-center bg-[#c1d8f0] px-[3px] text-[#3e6aaa]"><span class="flex-1 pr-2 text-center">Paragraph</span><svg class="size-[6px] fill-none stroke-[#5f80b4]" viewBox="0 0 6 6"><path d="M.5 4V.5H4M2 2l3.500 3.500V3M5.500 5.500H3"/></svg></div>
    </div>
    <div class="flex w-[66px] shrink-0 flex-col rounded-sm border border-[#b2cbe8]">
      <div class="flex min-h-0 flex-1 items-start justify-around pt-[3px] text-center leading-[9px]">
        <button class="flex flex-col items-center"><svg class="h-6 w-[22px]" viewBox="0 0 22 24" fill="none"><path stroke="#3a6cb8" stroke-width="3.400" d="M2 19L9 3l6 16M5 13h8"/><path stroke="#7d6a5a" stroke-width="3" d="M13 20l7-10"/></svg><span>Quick<br>Styles<span class="text-[5px]"> ▾</span></span></button>
        <button class="flex flex-col items-center"><svg class="h-6 w-[22px]" viewBox="0 0 22 24" fill="none"><path stroke="#c83ab0" stroke-width="2.800" d="M2 13L6 3l5 10M4 10h5"/><path stroke="#3a6cb8" stroke-width="3.200" d="M7 20l6-14 6 14M9 15h8"/></svg><span>Change<br>Styles<span class="text-[5px]"> ▾</span></span></button>
      </div>
      <div class="flex h-3 shrink-0 items-center bg-[#c1d8f0] px-[3px] text-[#3e6aaa]"><span class="flex-1 pr-1 text-center">Styles</span><svg class="size-[6px] fill-none stroke-[#5f80b4]" viewBox="0 0 6 6"><path d="M.5 4V.5H4M2 2l3.500 3.500V3M5.500 5.500H3"/></svg></div>
    </div>
    <button class="flex w-[30px] shrink-0 flex-col items-center rounded-sm border border-[#9dbbe2] pt-[3px]">
      <span class="grid h-[21px] w-[21px] place-items-center rounded-sm border border-[#b2cbe8] bg-[#e6f0fb]"><svg class="size-3"><use href="#binoc"/></svg></span>
      <span class="mt-px">Editing</span><svg class="mt-px size-1 fill-[#446]" viewBox="0 0 6 4"><path d="M0 0h6L3 4z"/></svg>
    </button>
  </div>

  <div class="flex min-h-0 flex-1 bg-linear-to-b from-[#9dbfea] via-[#668dc4] to-[#6391d1]">
    <main class="flex min-w-0 flex-1 items-start justify-center pt-[13px]">
      <article class="relative aspect-[402/518] w-[402px] shrink-0 bg-white pt-[47px] pl-[48px] font-['Lato','Open_Sans',sans-serif] text-[12px] leading-5 whitespace-nowrap text-[#111] shadow-[1px_1px_3px_1px_#35507a]">
        <div class="flex flex-col gap-[7px]">
          <p>HELLO FRIEND'S WELCOME TO WORLDTECHTIPS1<br>YOUTUBE CHANNEL.</p>
          <p>TODAY WE WILL START AUTOCAD CLASSES</p>
          <p>PART-1</p>
          <p>1ST 1 WE HAVE LINE COMMAND</p>
          <p>L+ENTR SORT KEY</p>
          <p>THIS IS THE LINE WHICH I DRAW ON THE SCREEN A<br>FRONT OF YOU.</p>
          <p>2ND COMMAND WE HAVE CONSTRACTION LINE</p>
          <p>SHORT KEY (XL+ENTR)</p>
          <span class="h-4 w-px bg-black"></span>
        </div>
        <span class="absolute top-[295px] left-[82px] size-[21px] rounded-full bg-[#fbf595]"></span>
      </article>
    </main>
    <div class="flex w-[7px] shrink-0 flex-col items-center overflow-hidden border-l border-[#4a6a9c] bg-[#dce8f8]">
      <span class="mt-[3px] h-[2px] w-full shrink-0 bg-[#234]"></span>
      <span class="mt-[2px] h-2 w-full shrink-0 border border-[#345] bg-white"></span>
      <span class="mt-[2px] h-3 w-full shrink-0 bg-[#86a6d0]"></span>
      <span class="mt-[262px] h-[5px] w-1 self-end bg-[#999]"></span>
      <span class="mt-auto grid h-3 w-full shrink-0 place-items-center bg-[#86a6d0]"><svg class="size-[5px] fill-[#123]" viewBox="0 0 6 4"><path d="M0 0h6L3 4z"/></svg></span>
      <span class="flex h-[37px] w-full shrink-0 flex-col items-center justify-around bg-[#a9c4ea]"><svg class="size-[5px] fill-[#123]" viewBox="0 0 6 6"><path d="M0 3h6L3 0zM0 6h6L3 3z"/></svg><svg class="size-[5px] fill-none stroke-[#123]" viewBox="0 0 6 6"><circle cx="3" cy="3" r="2"/></svg><svg class="size-[5px] fill-[#123]" viewBox="0 0 6 6"><path d="M0 0h6L3 3zM0 3h6L3 6z"/></svg></span>
    </div>
  </div>

  <footer class="flex h-[13px] shrink-0 items-start overflow-hidden border-t border-[#567fb8] bg-linear-to-b from-[#d4e6fb] to-[#a9c8ee] whitespace-nowrap">
    <span class="w-[55px] border-r border-[#93b3dc] pl-[6px]">Page: 1 of 1</span>
    <span class="w-[49px] border-r border-[#93b3dc] pl-[5px]">Words: 46</span>
    <span class="flex w-[117px] border-r border-[#93b3dc] pl-[5px]"><svg class="mr-[11px] size-3" viewBox="0 0 12 12"><path fill="#fff" stroke="#667" d="M1 5h5l2 2v4H3z"/><path fill="none" stroke="#357" stroke-width="1.500" d="M4 6l2 3 5-8"/></svg>English (United States)</span>
    <div class="ml-auto flex h-full border-x border-[#7fa2d0] bg-[#bdd3ee]"><div class="flex bg-[#fbd48a] [&>button]:w-[13px]" data-tools="w-print"></div><div class="flex [&>button]:w-[13px]" data-tools="w-read w-web w-outline w-just"></div></div>
    <span class="w-6 pl-[5px]">70%</span>
    <button aria-label="Zoom out" class="mx-1 mt-px grid size-[10px] place-items-center rounded-full border border-[#456] bg-white text-[9px] leading-none">−</button>
    <input type="range" aria-label="Zoom" min="10" max="200" value="70" class="mt-[2px] h-[9px] w-[66px] appearance-none bg-[linear-gradient(#5c7eb0,#5c7eb0)] bg-[length:100%_1px] bg-center bg-no-repeat [&::-webkit-slider-thumb]:h-[8px] [&::-webkit-slider-thumb]:w-[5px] [&::-webkit-slider-thumb]:appearance-none [&::-webkit-slider-thumb]:rounded-b-full [&::-webkit-slider-thumb]:border [&::-webkit-slider-thumb]:border-[#456] [&::-webkit-slider-thumb]:bg-white">
    <button aria-label="Zoom in" class="mt-px mr-[11px] ml-[2px] grid size-[10px] shrink-0 place-items-center rounded-full border border-[#456] bg-white text-[9px] leading-none">+</button>
  </footer>
</section>

<!-- ============ Screen recorder panel ============ -->
<section class="absolute bottom-[25px] left-[392px] flex h-[53px] w-[416px] flex-col border border-[#c9b8a8] bg-[#faf6f1] font-['Open_Sans','Noto_Sans',sans-serif] text-[10px] text-[#333] shadow-[1px_2px_4px_rgba(0,0,0,0.6)]">
  <header class="flex h-5 items-start">
    <svg class="mt-1 ml-[5px] size-3" viewBox="0 0 12 12"><path fill="#e27a25" d="M0 0h12v12H0z"/><circle cx="6" cy="6" r="3.500" fill="none" stroke="#fff" stroke-width="2"/></svg>
    <h2 class="flex-1 pt-1 pl-8 text-center whitespace-pre">Recording:  00:04:22</h2>
    <button aria-label="Minimize recorder" class="mt-[7px] mr-[7px] h-[2px] w-[6px] bg-[#333]"></button>
    <button aria-label="Close recorder" class="mr-1 grid h-[14px] w-8 place-items-center bg-[#c8434d]"><svg class="size-[6px]" viewBox="0 0 8 8"><path stroke="#fff" stroke-width="2" d="M1 1l6 6M7 1L1 7"/></svg></button>
  </header>
  <div class="flex flex-1 items-center pl-[6px]">
    <button class="flex items-center gap-[3px]"><svg class="size-4" viewBox="0 0 16 16"><circle cx="8" cy="8" r="7" fill="none" stroke="#444" stroke-width="1.300"/><path stroke="#444" stroke-width="2" d="M6 5v6M10 5v6"/></svg>Pause</button>
    <button class="ml-2 flex items-center gap-[9px]"><span class="size-[10px] bg-[#555]"></span>Stop</button>
    <button class="ml-auto flex items-center gap-[6px]"><svg class="size-4" viewBox="0 0 16 16"><path fill="#444" d="M1 15l1-5 8-8 4 4-8 8zM11 1l1-1 4 4-1 1z"/><path stroke="#faf6f1" d="M3 11l7-7M5 13l7-7"/></svg>Draw</button>
    <span class="mx-2 h-5 w-px bg-[#ddd]"></span>
    <button aria-label="Zoom in view" class="mr-2"><svg class="size-4" viewBox="0 0 16 16"><circle cx="10" cy="6" r="5" fill="none" stroke="#444" stroke-width="1.400"/><path stroke="#444" stroke-width="2.400" d="M6 10l-5 5"/><path stroke="#444" stroke-width="1.300" d="M8 6h4M10 4v4"/></svg></button>
    <button aria-label="Zoom out view" class="mr-[6px]"><svg class="size-4" viewBox="0 0 16 16"><circle cx="10" cy="6" r="5" fill="none" stroke="#444" stroke-width="1.400"/><path stroke="#444" stroke-width="2.400" d="M6 10l-5 5"/><path stroke="#444" stroke-width="1.300" d="M8 6h4"/></svg></button>
    <span>x1</span>
    <span class="mr-[6px] ml-2 h-5 w-px bg-[#ddd]"></span>
    <div class="mr-[3px] flex h-[28px] gap-[5px]">
      <button aria-label="Webcam" class="grid w-5 place-items-center border-b-2 border-[#97384a]"><svg class="h-[17px] w-4" viewBox="0 0 16 17"><circle cx="8" cy="7" r="6.500" fill="#b5b2ae"/><circle cx="8" cy="7" r="3.500" fill="#faf6f1"/><circle cx="8" cy="7" r="2" fill="#b5b2ae"/><path fill="#b5b2ae" d="M3 13h10l1 4H2z"/></svg></button>
      <button aria-label="Sound" class="grid w-5 place-items-center border-b-2 border-[#8cb04a]"><svg class="size-4" viewBox="0 0 16 16"><path fill="#444" d="M1 5h3l5-4v14l-5-4H1z"/><path fill="none" stroke="#444" d="M11 6v4M13 4.500c1 2 1 5 0 7"/></svg></button>
      <button aria-label="Microphone" class="grid w-5 place-items-center border-b-2 border-[#8cb04a]"><svg class="size-4" viewBox="0 0 16 16"><rect x="5.500" y="0" width="5" height="10" rx="2.500" fill="#555"/><path fill="none" stroke="#555" d="M3.500 6v2c0 5 9 5 9 0V6M8 12v3.500M5 15.500h6"/></svg></button>
    </div>
  </div>
</section>
</div>

<script>
  // Fills each toolbar from its list of symbol names; "|" and "-" are dividers, "v" is a drop-down arrow.
  const SVG = 'http://www.w3.org/2000/svg';
  document.querySelectorAll('[data-tools]').forEach(bar => {
    bar.dataset.tools.split(' ').forEach(name => {
      if (name === '|' || name === '-') {
        const d = document.createElement('span');
        d.className = name === '|' ? 'h-3 w-px mx-px bg-[#555]' : 'h-px w-3 bg-[#999]';
        bar.append(d);
        return;
      }
      const b = document.createElement('button');
      b.setAttribute('aria-label', name === 'v' ? 'More' : name);
      const s = document.createElementNS(SVG, 'svg');
      if (name === 'v') {
        b.className = 'grid w-[6px] h-3 place-items-center';
        s.setAttribute('class', 'size-1 fill-[#555]');
        s.setAttribute('viewBox', '0 0 6 4');
        s.innerHTML = '<path d="M0 0h6L3 4z"/>';
      } else {
        b.className = 'grid w-[15px] h-[14px] shrink-0 place-items-center';
        s.setAttribute('class', 'size-[13px] fill-none stroke-[#444]');
        s.innerHTML = '<use href="#' + name + '"/>';
      }
      b.append(s);
      bar.append(b);
    });
  });
</script>
</body>
</html>
